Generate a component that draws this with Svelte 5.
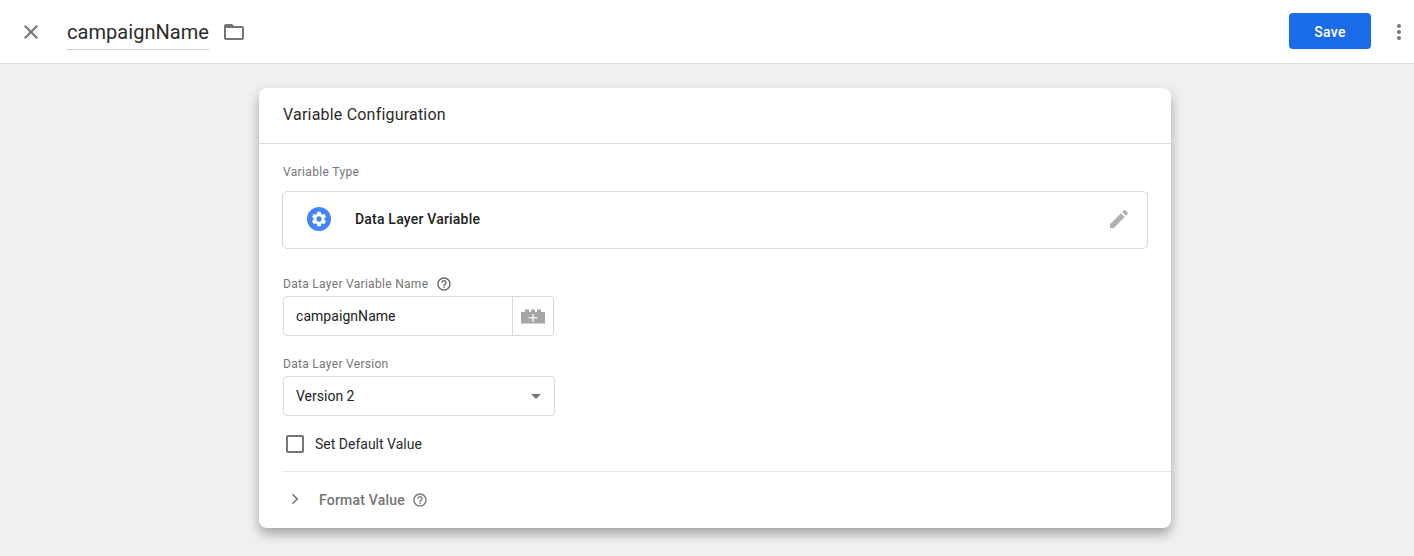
<script>
  const title = 'campaignName';
</script>

<div class="page">
  <header class="top">
    <button class="icon-btn close" aria-label="Close">
      <svg width="24" height="24" viewBox="0 0 24 24"><path fill="#757575" d="M19 6.41 17.59 5 12 10.59 6.41 5 5 6.41 10.59 12 5 17.59 6.41 19 12 13.41 17.59 19 19 17.59 13.41 12z"/></svg>
    </button>
    <div class="name">{title}</div>
    <svg class="folder" width="24" height="24" viewBox="0 0 24 24"><path fill="#757575" d="M20 6h-8l-2-2H4c-1.100 0-1.990.9-1.990 2L2 18c0 1.100.9 2 2 2h16c1.100 0 2-.9 2-2V8c0-1.100-.9-2-2-2zm0 12H4V8h16v10z"/></svg>
    <div class="spacer"></div>
    <button class="save">Save</button>
    <svg class="more" width="24" height="24" viewBox="0 0 24 24"><path fill="#757575" d="M12 8c1.100 0 2-.9 2-2s-.9-2-2-2-2 .9-2 2 .9 2 2 2zm0 2c-1.100 0-2 .9-2 2s.9 2 2 2 2-.9 2-2-.9-2-2-2zm0 6c-1.100 0-2 .9-2 2s.9 2 2 2 2-.9 2-2-.9-2-2-2z"/></svg>
  </header>

  <main class="main">
    <section class="card">
      <div class="card-title">Variable Configuration</div>
      <div class="card-body">
        <div class="label first">Variable Type</div>
        <div class="type-box">
          <svg class="gear" width="24" height="24" viewBox="0 0 24 24">
            <circle cx="12" cy="12" r="12" fill="#4285f4"/>
            <path fill="#fff" transform="translate(3 3) scale(.75)" d="M19.140 12.940c.04-.3.060-.61.060-.94 0-.32-.02-.64-.07-.94l2.030-1.580a.49.49 0 0 0 .12-.61l-1.920-3.320a.488.488 0 0 0-.59-.22l-2.390.96c-.5-.38-1.030-.7-1.620-.94l-.36-2.540a.484.484 0 0 0-.48-.41h-3.840c-.24 0-.43.17-.47.41l-.36 2.540c-.59.24-1.130.57-1.620.94l-2.390-.96c-.22-.08-.47 0-.59.22L2.740 8.870c-.12.21-.08.47.12.61l2.030 1.580c-.05.3-.09.63-.09.94s.02.64.07.94l-2.030 1.580a.49.49 0 0 0-.12.61l1.920 3.320c.12.22.37.29.59.22l2.390-.96c.5.38 1.030.7 1.620.94l.36 2.540c.05.24.24.41.48.41h3.840c.24 0 .44-.17.47-.41l.36-2.540c.59-.24 1.130-.56 1.620-.94l2.390.96c.22.08.47 0 .59-.22l1.920-3.320c.12-.22.07-.47-.12-.61l-2.010-1.580zM12 15.600c-1.980 0-3.600-1.620-3.600-3.600s1.620-3.600 3.600-3.600 3.600 1.620 3.600 3.600-1.620 3.600-3.600 3.600z"/>
          </svg>
          <div class="type-name">Data Layer Variable</div>
          <svg class="pencil" width="24" height="24" viewBox="0 0 24 24"><path fill="#b0b0b0" d="M3 17.250V21h3.750L17.810 9.940l-3.750-3.750L3 17.250zM20.710 7.040a.996.996 0 0 0 0-1.410l-2.340-2.340a.996.996 0 0 0-1.410 0l-1.830 1.830 3.750 3.750 1.830-1.830z"/></svg>
        </div>

        <div class="label with-help">
          Data Layer Variable Name
          <svg class="help" width="16" height="16" viewBox="0 0 24 24"><path fill="#5f6368" d="M11 18h2v-2h-2v2zm1-16C6.480 2 2 6.480 2 12s4.480 10 10 10 10-4.480 10-10S17.520 2 12 2zm0 18c-4.410 0-8-3.590-8-8s3.590-8 8-8 8 3.590 8 8-3.590 8-8 8zm0-14c-2.210 0-4 1.790-4 4h2c0-1.100.9-2 2-2s2 .9 2 2c0 2-3 1.750-3 5h2c0-2.250 3-2.500 3-5 0-2.210-1.790-4-4-4z"/></svg>
        </div>
        <div class="input-row">
          <div class="input-text">campaignName</div>
          <div class="input-add">
            <svg width="24" height="16" viewBox="0 0 24 16">
              <path fill="#a6a6a6" d="M0 4h4V1.500h4V4h2V1.500h4V4h2V1.500h4V4h4v11.500H0z"/>
              <path fill="#ececec" d="M11.200 6h1.600v3h3.700v1.500h-3.700v3.500h-1.600v-3.500H7.500V9h3.700z"/>
            </svg>
          </div>
        </div>

        <div class="label version">Data Layer Version</div>
        <div class="select">
          <span>Version 2</span>
          <span class="caret"></span>
        </div>

        <div class="check-row">
          <span class="checkbox"></span>
          <span class="check-label">Set Default Value</span>
        </div>
      </div>

      <div class="format">
        <svg class="chevron" width="24" height="24" viewBox="0 0 24 24"><path fill="#757575" d="M10 6.700 8.900 7.800l4.200 4.200-4.200 4.200 1.100 1.100 5.300-5.300z"/></svg>
        <span class="format-label">Format Value</span>
        <svg class="help" width="16" height="16" viewBox="0 0 24 24"><path fill="#757575" d="M11 18h2v-2h-2v2zm1-16C6.480 2 2 6.480 2 12s4.480 10 10 10 10-4.480 10-10S17.520 2 12 2zm0 18c-4.410 0-8-3.590-8-8s3.590-8 8-8 8 3.590 8 8-3.590 8-8 8zm0-14c-2.210 0-4 1.790-4 4h2c0-1.100.9-2 2-2s2 .9 2 2c0 2-3 1.750-3 5h2c0-2.250 3-2.500 3-5 0-2.210-1.790-4-4-4z"/></svg>
      </div>
    </section>
  </main>
</div>

<style>
  :global(body) {
    margin: 0;
    background: #eff0f2;
    overflow: hidden;
  }
  .page {
    font-family: Roboto, "Liberation Sans", sans-serif;
    height: 556px;
    overflow: hidden;
    background: #eff0f2;
    color: #212121;
  }
  .top {
    height: 63px;
    background: #fff;
    border-bottom: 1px solid #d9d9d9;
    display: flex;
    align-items: center;
  }
  .icon-btn {
    padding: 0;
    border: 0;
    background: none;
    display: flex;
  }
  .close { margin-left: 19px; }
  .name {
    margin-left: 24px;
    font-size: 20px;
    line-height: 28px;
    color: #2b2b2b;
    letter-spacing: .05px;
    border-bottom: 1px solid #d0d0d0;
    box-sizing: border-box;
    height: 35px;
    margin-top: 1px;
    padding-top: 3px;
  }
  .folder { margin-left: 13px; margin-top: 1px; }
  .spacer { flex: 1; }
  .save {
    width: 82px;
    height: 36px;
    border: 0;
    border-radius: 4px;
    background: #1a6ce8;
    color: #fff;
    font: 500 14px Roboto, sans-serif;
    letter-spacing: 0.25px;
    margin-top: -1px;
    padding: 2px 0 0;
  }
  .more { margin-left: 16px; margin-right: 3px; }
  .main {
    display: flex;
    justify-content: center;
    padding-top: 24px;
  }
  .card {
    width: 912px;
    height: 440px;
    background: #fff;
    border-radius: 8px;
    box-shadow: 0 6px 12px rgba(0, 0, 0, .32);
    box-sizing: border-box;
    margin-left: 16px;
  }
  .card-title {
    box-sizing: border-box;
    border-bottom: 1px solid #dcdcdc;
    padding: 17px 24px 0;
    font-size: 16px;
    line-height: 20px;
    letter-spacing: .2px;
    color: #2b2b2b;
    height: 56px;
  }
  .card-body { padding: 0 23px 0 24px; }
  .label {
    font-size: 12px;
    line-height: 16px;
    letter-spacing: .3px;
    color: #757575;
  }
  .first { padding-top: 20px; letter-spacing: .35px; }
  .type-box {
    margin-top: 11px;
    margin-left: -1px;
    height: 58px;
    box-sizing: border-box;
    border: 1px solid #d9d9d9;
    border-radius: 5px;
    display: flex;
    align-items: center;
    padding-left: 24px;
    padding-right: 16px;
  }
  .type-name {
    margin-left: 24px;
    font-size: 14px;
    font-weight: 500;
    letter-spacing: .2px;
    flex: 1;
    position: relative;
    top: -1px;
  }
  .gear { position: relative; top: -1px; }
  .pencil { position: relative; top: -1px; }
  .with-help {
    margin-top: 27px;
    display: flex;
    align-items: center;
    gap: 8px;
  }
  .input-row {
    margin-top: 4px;
    width: 271px;
    height: 40px;
    box-sizing: border-box;
    border: 1px solid #d9d9d9;
    border-radius: 4px;
    display: flex;
  }
  .input-text {
    width: 229px;
    box-sizing: border-box;
    border-right: 1px solid #d9d9d9;
    padding-left: 12px;
    font-size: 14px;
    line-height: 38px;
    letter-spacing: .05px;
  }
  .input-add {
    flex: 1;
    display: flex;
    align-items: center;
    justify-content: center;
  }
  .version { margin-top: 20px; }
  .select {
    margin-top: 4px;
    width: 272px;
    height: 40px;
    box-sizing: border-box;
    border: 1px solid #d9d9d9;
    border-radius: 4px;
    display: flex;
    align-items: center;
    justify-content: space-between;
    padding: 0 13px 0 12px;
    font-size: 14px;
  }
  .caret {
    width: 0;
    height: 0;
    border-left: 5px solid transparent;
    border-right: 5px solid transparent;
    border-top: 5px solid #757575;
  }
  .check-row {
    margin-top: 18px;
    margin-left: 3px;
    display: flex;
    align-items: center;
    height: 20px;
  }
  .checkbox {
    width: 18px;
    height: 18px;
    box-sizing: border-box;
    border: 2px solid #757575;
    border-radius: 2px;
  }
  .check-label {
    margin-left: 11px;
    font-size: 14px;
    color: #2b2b2b;
  }
  .format {
    margin: 17px 0 0 24px;
    border-top: 1px solid #e4e4e4;
    height: 56px;
    box-sizing: border-box;
    display: flex;
    align-items: center;
  }
  .chevron { position: relative; top: -1px; }
  .format-label {
    margin-left: 12px;
    font-size: 14px;
    font-weight: 500;
    letter-spacing: .2px;
    color: #757575;
    margin-right: 7px;
  }
</style>
